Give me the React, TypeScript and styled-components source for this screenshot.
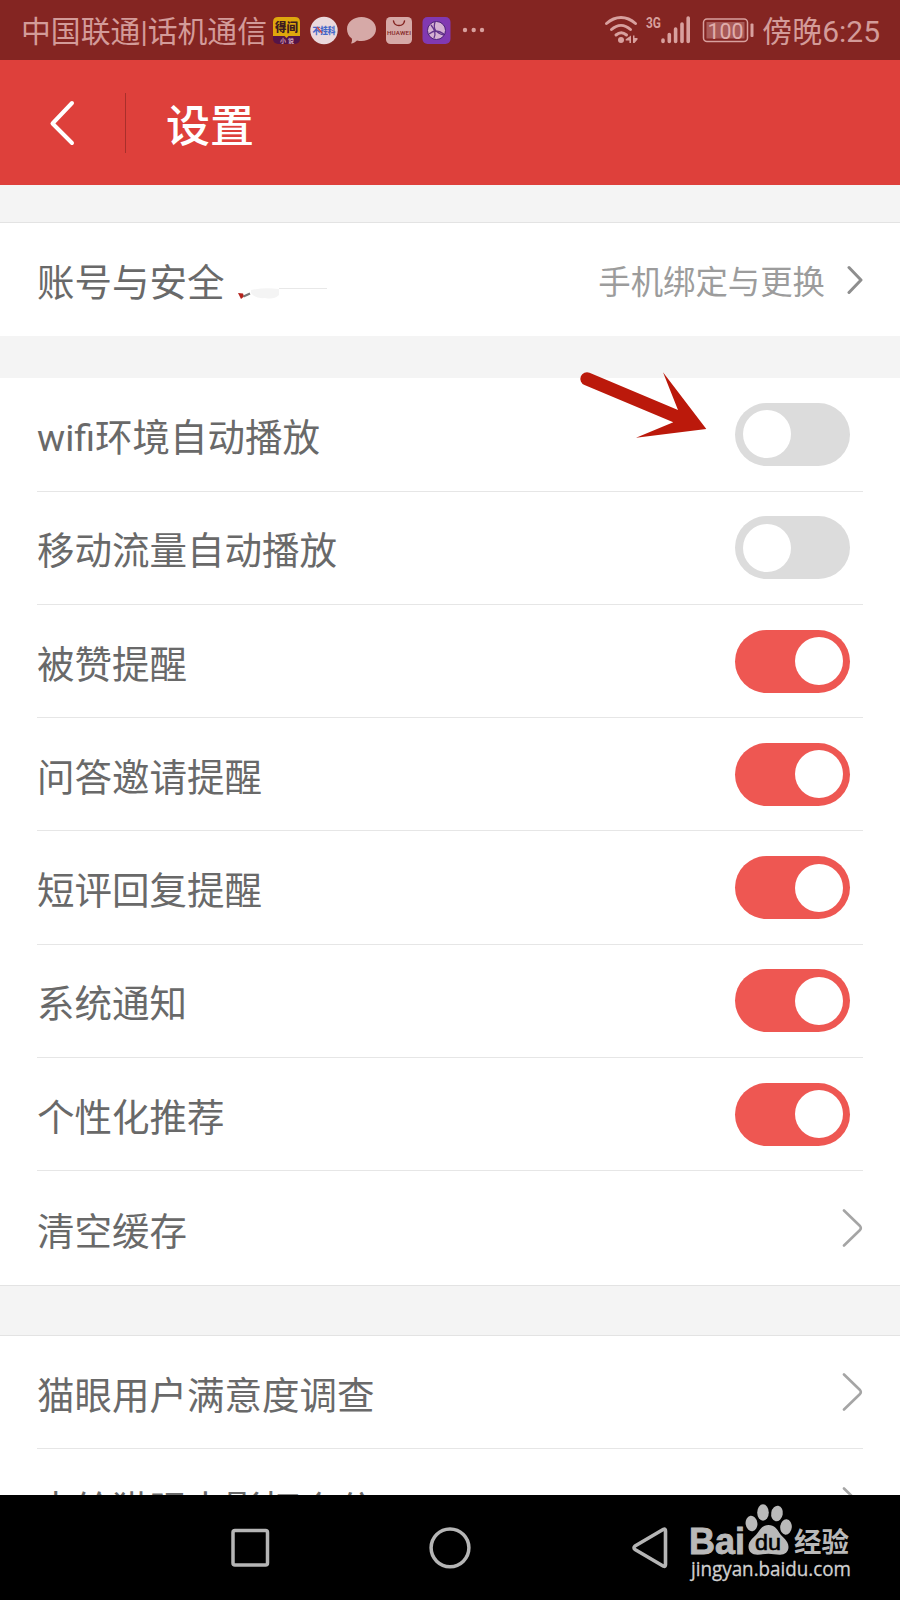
import React from 'react';
import styled, { createGlobalStyle } from 'styled-components';

const GlobalStyle = createGlobalStyle`
  * { box-sizing: border-box; }
  body { margin: 0; background: #f4f4f4; }
`;

const Screen = styled.div`
  position: relative;
  width: 900px;
  height: 1600px;
  display: flex;
  flex-direction: column;
  overflow: hidden;
  background: #f4f4f4;
  font-family: Roboto, 'Noto Sans CJK SC', sans-serif;
`;

const StatusBar = styled.div`
  flex: none;
  height: 60px;
  padding: 0 20px 0 21px;
  display: flex;
  align-items: center;
  justify-content: space-between;
  background: #842522;
  color: #d39b99;
  font-size: 30px;
  line-height: 60px;
  white-space: nowrap;
`;

const StatusGroup = styled.div`
  display: flex;
  align-items: center;
  height: 60px;
  svg { display: block; flex: none; }
`;

const StatusText = styled.span`
  padding-top: 3px;
`;

const Carrier = styled(StatusText)`
  width: 248px;
  font-size: 29.85px;
`;

const Header = styled.header`
  flex: none;
  height: 125px;
  display: flex;
  align-items: center;
  background: #de403b;
`;

const BackButton = styled.button`
  width: 126px;
  height: 60px;
  padding: 0 0 0 49px;
  border: 0;
  border-right: 1px solid #a92f2b;
  background: none;
  svg { display: block; }
`;

const Title = styled.h1`
  margin: 0 0 0 40px;
  color: #fff;
  font-size: 44px;
  font-weight: 500;
  line-height: 64px;
  padding-top: 8px;
`;

const Content = styled.main`
  flex: 1;
  min-height: 0;
  overflow: hidden;
`;

const Gap = styled.div<{ $h: number; $top?: boolean; $bottom?: boolean }>`
  height: ${(p) => p.$h}px;
  background: #f4f4f4;
  border-top: ${(p) => (p.$top ? '1px solid #e3e3e3' : '0')};
  border-bottom: ${(p) => (p.$bottom ? '1px solid #e3e3e3' : '0')};
`;

const Group = styled.section`
  padding: 0 37px;
  background: #fff;
`;

const Row = styled.div<{ $last?: boolean }>`
  height: 113.3px;
  display: flex;
  align-items: center;
  border-bottom: ${(p) => (p.$last ? '0' : '1px solid #e6e6e6')};
  svg { display: block; flex: none; }
`;

const Label = styled.span`
  flex: 1;
  padding-top: 7px;
  color: #696969;
  font-size: 37.5px;
  line-height: 56px;
  white-space: nowrap;
`;

const Hint = styled.span`
  padding-top: 7px;
  margin-right: 21px;
  color: #9c9c9c;
  font-size: 32.4px;
  line-height: 48px;
`;

const Toggle = styled.div<{ $on: boolean }>`
  width: 115px;
  height: 63px;
  margin-right: 13px;
  padding: 0 7px 0 8px;
  display: flex;
  align-items: center;
  justify-content: ${(p) => (p.$on ? 'flex-end' : 'flex-start')};
  border-radius: 32px;
  background: ${(p) => (p.$on ? '#ee5752' : '#dcdcdc')};
`;

const Knob = styled.i`
  width: 48px;
  height: 48px;
  border-radius: 50%;
  background: #fff;
`;

const NavBar = styled.nav`
  flex: none;
  height: 105px;
  padding: 0 0 2px 230px;
  display: flex;
  align-items: center;
  background: #000;
  svg { display: block; flex: none; }
`;

const NavButton = styled.button<{ $gap?: number }>`
  flex: none;
  width: 42px;
  height: 44px;
  padding: 0;
  border: 0;
  margin-right: ${(p) => p.$gap ?? 0}px;
  background: none;
`;

const Pointer = styled.svg`
  position: absolute;
  left: 575px;
  top: 365px;
`;

const Scribble = styled.svg`
  position: absolute;
  left: 236px;
  top: 284px;
`;

const BigChevron = () => (
  <svg width="21" height="40" viewBox="0 0 21 40" fill="none" stroke="#a5a5a5" strokeWidth="2.6" strokeLinecap="round" strokeLinejoin="round">
    <path d="M2 2.5 L18 18 Q19.6 20 18 22 L2 37.5" />
  </svg>
);

const StatusIcons = () => (
  <svg width="216" height="60" viewBox="269 0 216 60">
    <rect x="273" y="17" width="27" height="27" rx="5" fill="#551447" />
    <path d="M273 36V22q0-5 5-5h17q5 0 5 5v14h-11.500l-2 2-2-2z" fill="#dfa70d" />
    <text x="286.500" y="31.500" fontSize="12" fontWeight="900" textAnchor="middle" fill="#3e1a20" textLength="23" lengthAdjust="spacingAndGlyphs">得间</text>
    <text x="287" y="43" fontSize="6" fontWeight="700" textAnchor="middle" fill="#d3a5b8" textLength="14">小说</text>
    <circle cx="324" cy="30.500" r="13.700" fill="#ead8dc" />
    <text x="324" y="34" fontSize="9" fontWeight="900" textAnchor="middle" fill="#4467c9" textLength="23" lengthAdjust="spacingAndGlyphs">不挂科</text>
    <path d="M317 27l5 6" stroke="#cf4646" strokeWidth="1.300" />
    <path d="M361.500 17c8 0 14.500 5.200 14.500 12s-6.500 12-14.500 12c-1.500 0-3 0-4.500-.6-1.500 1.600-3.500 2.800-6 3 1-1.400 1.200-3 .8-4.900-3-2.200-4.800-5.600-4.800-9.500 0-6.800 6.500-12 14.500-12z" fill="#d6a9a7" />
    <rect x="386" y="17" width="26" height="27" rx="4.500" fill="#d6a9a7" />
    <path d="M393.500 21c1 6 10 6 11 0" fill="none" stroke="#842522" strokeWidth="1.500" strokeLinecap="round" />
    <text x="399" y="35" fontFamily="Roboto" fontSize="6.200" fontWeight="500" textAnchor="middle" fill="#842522" textLength="24">HUAWEI</text>
    <rect x="422.500" y="17" width="28" height="27" rx="5" fill="#8139b2" />
    <circle cx="436.500" cy="30.500" r="9" fill="#d5b1d3" stroke="#4d2379" strokeWidth="1" />
    <path d="M435 22c-2 6 0 11 9 13M429 34c5-4 9-4 15 0M431 25c4 5 5 8 3 13" fill="none" stroke="#63338b" strokeWidth="1.300" />
    <g fill="#d8a09e"><circle cx="465" cy="30" r="2.200" /><circle cx="473.700" cy="30" r="2.200" /><circle cx="482" cy="30" r="2.200" /></g>
  </svg>
);

const SignalIcons = () => (
  <svg width="158" height="60" viewBox="604 0 158 60">
    <g fill="none" stroke="#d8a09e" strokeWidth="3" strokeLinecap="round">
      <path d="M606.500 23.500c9-8 20-8 29 0" />
      <path d="M611.500 29.500c6-5.500 13-5.500 19 0" />
      <path d="M616 35c3.500-3 7-3 10.500 0" />
    </g>
    <circle cx="621" cy="40" r="3" fill="#d8a09e" />
    <path d="M631 35.500v7.500h-1.600v-2.500h-3.700v-1.200zM633 35.500h1.500v2.500h3v1.500l-3 3.500H633z" fill="#d8a09e" />
    <text x="646" y="27.500" fontFamily="Roboto" fontSize="15" fontWeight="700" fill="#d8a09e" textLength="15" lengthAdjust="spacingAndGlyphs">3G</text>
    <g stroke="#d8a09e" strokeWidth="3.600" strokeLinecap="round">
      <path d="M663 40v1.500M669.300 34.500v7M675.600 29v12.500M682 24v17.500M688.200 18v23.500" />
    </g>
    <rect x="703.500" y="19" width="44" height="22.500" rx="3.500" fill="none" stroke="#d8a09e" strokeWidth="1.500" />
    <rect x="706.500" y="22" width="38" height="16.500" fill="#a85a58" />
    <text x="725.500" y="38.500" fontFamily="Roboto" fontSize="22.500" textAnchor="middle" fill="#e0adab" textLength="36" lengthAdjust="spacingAndGlyphs">100</text>
    <rect x="750.500" y="23.500" width="3" height="13.500" rx="1" fill="#d8a09e" />
  </svg>
);

const WatermarkSvg = styled.svg`
  position: absolute;
  left: 680px;
  top: 1500px;
`;

const Watermark = () => (
  <WatermarkSvg width="180" height="90" viewBox="680 1500 180 90" fill="#b9b9b9">
    <text x="689" y="1553.500" fontFamily="Liberation Sans" fontSize="36.500" fontWeight="700" textLength="56" lengthAdjust="spacingAndGlyphs" stroke="#b9b9b9" strokeWidth=".9">Bai</text>
    <ellipse cx="751.500" cy="1523.500" rx="5.900" ry="7.700" transform="rotate(-8 751.500 1523.500)" />
    <ellipse cx="763" cy="1512.500" rx="5.800" ry="8.200" />
    <ellipse cx="777" cy="1513.500" rx="5.800" ry="7.800" transform="rotate(10 777 1513.500)" />
    <ellipse cx="786" cy="1527" rx="5.800" ry="7.700" transform="rotate(5 786 1527)" />
    <path d="M768.500 1525c6 0 8.500 4 11 8 3 4.500 9 7.500 9 14 0 5-4 8-9 7.700-4-.2-7-1-11-1s-7 1-11 1c-5.500 0-9-3.200-9-8 0-6.200 5.500-9 9-13.700 3-4 5-8 11-8z" />
    <text x="768" y="1549.500" fontFamily="Liberation Sans" fontSize="22" textAnchor="middle" textLength="26" lengthAdjust="spacingAndGlyphs" fill="#000" stroke="#000" strokeWidth=".6">du</text>
    <text x="794" y="1551.500" fontFamily="Noto Sans CJK SC" fontSize="27" fontWeight="700" textLength="55" lengthAdjust="spacingAndGlyphs">经验</text>
    <text x="691" y="1575.500" fontFamily="Open Sans" fontSize="20" textLength="160" lengthAdjust="spacingAndGlyphs" fill="#d0d0d0" stroke="#d0d0d0" strokeWidth=".3">jingyan.baidu.com</text>
  </WatermarkSvg>
);

const toggles = [
  { label: 'wifi环境自动播放', on: false },
  { label: '移动流量自动播放', on: false },
  { label: '被赞提醒', on: true },
  { label: '问答邀请提醒', on: true },
  { label: '短评回复提醒', on: true },
  { label: '系统通知', on: true },
  { label: '个性化推荐', on: true },
];

export default function App() {
  return (
    <Screen>
      <GlobalStyle />
      <StatusBar>
        <StatusGroup>
          <Carrier>中国联通|话机通信</Carrier>
          <StatusIcons />
        </StatusGroup>
        <StatusGroup>
          <SignalIcons />
          <StatusText>傍晚6:25</StatusText>
        </StatusGroup>
      </StatusBar>
      <Header>
        <BackButton aria-label="返回">
          <svg width="28" height="48" viewBox="0 0 28 48" fill="none" stroke="#fff" strokeWidth="4" strokeLinecap="round" strokeLinejoin="round">
            <path d="M23 4 L3.500 24.500 L23 44" />
          </svg>
        </BackButton>
        <Title>设置</Title>
      </Header>
      <Content>
        <Gap $h={38} $bottom />
        <Group>
          <Row $last>
            <Label>账号与安全</Label>
            <Hint>手机绑定与更换</Hint>
            <svg width="17" height="30" viewBox="0 0 17 30" fill="none" stroke="#8e8e8e" strokeWidth="3" strokeLinecap="round" strokeLinejoin="round">
              <path d="M3 2.500 L15 15 L3 27.500" />
            </svg>
          </Row>
        </Group>
        <Gap $h={42} />
        <Group>
          {toggles.map((t) => (
            <Row key={t.label}>
              <Label>{t.label}</Label>
              <Toggle $on={t.on} role="switch" aria-checked={t.on}>
                <Knob />
              </Toggle>
            </Row>
          ))}
          <Row $last>
            <Label>清空缓存</Label>
            <BigChevron />
          </Row>
        </Group>
        <Gap $h={51.5} $top $bottom />
        <Group>
          <Row>
            <Label>猫眼用户满意度调查</Label>
            <BigChevron />
          </Row>
          <Row $last>
            <Label>去给猫眼电影打个分</Label>
            <BigChevron />
          </Row>
        </Group>
      </Content>
      <NavBar>
        <NavButton $gap={157} aria-label="最近任务">
          <svg width="42" height="44" fill="none" stroke="#b5b5b5" strokeWidth="3.500">
            <rect x="3" y="5.500" width="34.500" height="34.500" rx="2" />
          </svg>
        </NavButton>
        <NavButton $gap={158} aria-label="主页">
          <svg width="42" height="44" fill="none" stroke="#b5b5b5" strokeWidth="3.500">
            <circle cx="21" cy="22.800" r="18.900" />
          </svg>
        </NavButton>
        <NavButton aria-label="返回">
          <svg width="42" height="44" fill="none" stroke="#b5b5b5" strokeWidth="3.600" strokeLinejoin="round">
            <path d="M34.500 4.300 Q36.500 3.500 36.500 6 V39.500 Q36.500 42 34.500 41.200 L6 24.500 Q4 22.800 6 21 Z" />
          </svg>
        </NavButton>
      </NavBar>
      <Scribble width="92" height="18" viewBox="236 284 92 18">
        <path d="M238 293l5 .5 1 3-3 2.500z" fill="#b5221c" />
        <path d="M243.500 296.500l6.500-3" stroke="#777" strokeWidth="2" />
        <path d="M251 290q14-3 28-1v6q-5 5-14 3-10 1-14-5z" fill="#f4f4f4" />
        <path d="M279 288.500h48" stroke="#e8e8e8" />
      </Scribble>
      <Pointer width="140" height="80" viewBox="575 365 140 80" fill="#bb190b">
        <path d="M589.500 372.700L678 410 663 372.300 706.300 429 636 437.700 673.300 422.300 584.500 385A6.600 6.600 0 0 1 589.500 372.700z" />
      </Pointer>
      <Watermark />
    </Screen>
  );
}
